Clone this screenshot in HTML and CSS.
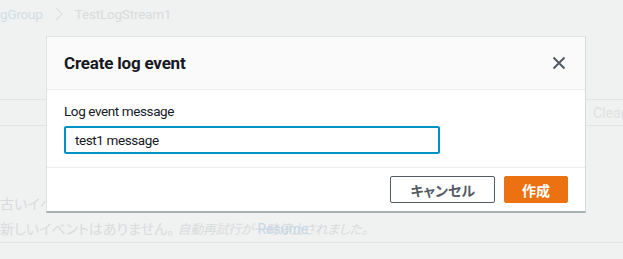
FILE: index.html
```html
<!doctype html>
<html lang="ja">
<head>
<meta charset="utf-8">
<title>Create log event</title>
<link rel="stylesheet" href="styles.css">
</head>
<body>

<!-- page behind the dialog -->
<div class="page">
  <nav class="crumbs">
    <a href="#">gGroup</a>
    <span class="sep">
      <svg width="8" height="14" viewBox="0 0 8 14"><path d="M1 1l6 6-6 6" fill="none" stroke="currentColor" stroke-width="1.3"/></svg>
    </span>
    <span>TestLogStream1</span>
  </nav>

  <div class="toolbar">
    <span class="clear">Clear</span>
  </div>

  <div class="events">
    <p class="row">古いイベントはありません。</p>
    <p class="row">新しいイベントはありません。 <em>自動再試行が一時停止されました。</em><a class="resume" href="#">Resume</a></p>
  </div>
</div>

<!-- ── modal ─────────────────────────────────────────── -->
<div class="overlay">
  <div class="modal">
    <header class="modal-head">
      <h2>Create log event</h2>
      <button class="close" aria-label="Close">
        <svg width="14" height="14" viewBox="0 0 14 14"><path d="M1.5 1.5l11 11M12.5 1.5l-11 11" stroke="currentColor" stroke-width="2"/></svg>
      </button>
    </header>

    <div class="modal-body">
      <label for="msg">Log event message</label>
      <input id="msg" type="text" value="test1 message">
    </div>

    <footer class="modal-foot">
      <button class="btn">キャンセル</button>
      <button class="btn primary">作成</button>
    </footer>
  </div>
</div>

</body>
</html>
```

FILE: styles.css
```css
:root{
  --bg:      #f0f1f1;   /* dimmed page */
  --faded:   #d9dcdc;   /* text under the overlay */
  --line:    #e3e5e5;
  --txt:     #16191f;
  --grey:    #545b64;
  --focus:   #0093c4;
  --orange:  #ec7211;
}

* {
  box-sizing: border-box;
  margin: 0;
  padding: 0;
}
body {
  font-family: Roboto, "Noto Sans CJK JP", sans-serif;
  font-size: 14px;
  background: var(--bg);
  color: var(--txt);
  width: 623px;
  height: 259px;
  overflow: hidden;
  position: relative;
}

/* ── page behind ───────────────────────────────────────────── */
.page {
  color: var(--faded);
  white-space: nowrap;
}
.crumbs {
  display: flex;
  align-items: center;
  gap: 12px;
  height: 28px;
  font-size: 13.5px;
  letter-spacing: -.2px;
}
.crumbs a {
  color: #d3dee6;
  text-decoration: none;
}
.crumbs .sep {
  display: flex;
  color: #e0e2e2;
}
.toolbar {
  margin-top: 71px;
  height: 27px;
  border-top: 1px solid var(--line);
  border-bottom: 1px solid var(--line);
  padding-left: 593px;
  display: flex;
  align-items: center;
  font-size: 14px;
  color: #dfe1e1;
}
.events {
  padding-top: 66px;
  border-bottom: 1px solid var(--line);
}
.row {
  font-feature-settings: "palt";
  height: 25px;
  line-height: 25px;
}
.row em {
  font-size: 13px;
  letter-spacing: -.4px;
}
.resume {
  color: #c6d8e6;
  text-decoration: none;
  margin-left: -110px;
}

/* ── modal ─────────────────────────────────────────────────── */
.overlay {
  position: absolute;
  inset: 0;
}
.modal {
  position: absolute;
  left: 46px;
  top: 36px;
  width: 540px;
  background: #fff;
  border: 1px solid #e0e2e2;
  border-bottom: 2px solid #a9b1b3;
  border-right-color: #d5d9d9;
}
.modal-head {
  background: #fafafa;
  height: 53px;
  border-bottom: 1px solid #eaeded;
  display: flex;
  align-items: center;
  justify-content: space-between;
  padding: 0 19px 0 17px;
}
.modal-head h2 {
  font-size: 17px;
  font-weight: 700;
  letter-spacing: -.2px;
}
.close {
  border: 0;
  background: none;
  color: var(--grey);
  display: flex;
}

.modal-body {
  padding: 13px 17px 13px;
  display: grid;
  gap: 7px;
}
.modal-body label {
  font-size: 13.5px;
  letter-spacing: -.4px;
}
.modal-body input {
  font: inherit;
  font-size: 13.5px;
  width: 376px;
  height: 28px;
  border: 2px solid var(--focus);
  border-radius: 2px;
  padding: 0 9px;
  color: var(--txt);
  outline: none;
  letter-spacing: -.4px;
}

.modal-foot {
  border-top: 1px solid #eaeded;
  display: flex;
  justify-content: flex-end;
  gap: 9px;
  padding: 8px 17px 8px;
}
.btn {
  font-family: Roboto, "Noto Sans CJK JP", sans-serif;
  font-feature-settings: "palt";
  font-size: 14px;
  font-weight: 700;
  height: 27px;
  padding: 0 19px;
  border-radius: 2px;
  border: 1px solid var(--grey);
  background: #fff;
  color: var(--grey);
}
.btn.primary {
  background: var(--orange);
  border-color: var(--orange);
  color: #fff;
  width: 64px;
  padding: 0;
}
```
